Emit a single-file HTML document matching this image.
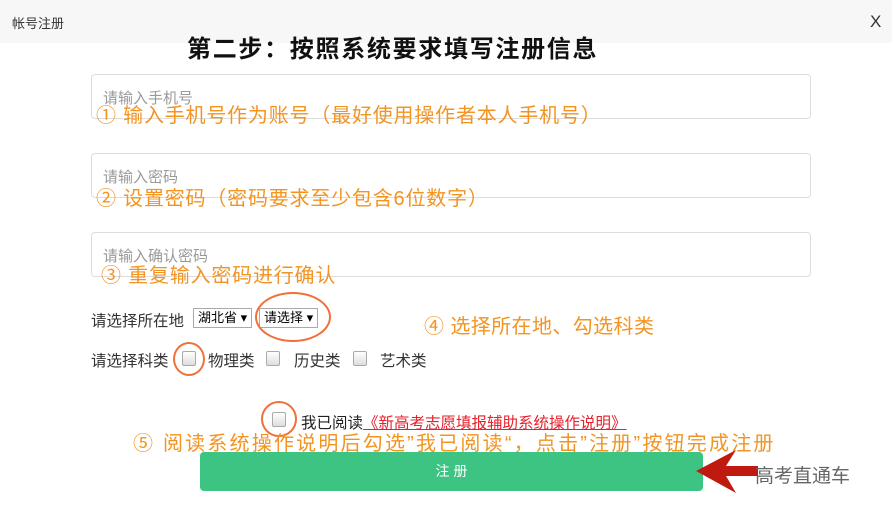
<!DOCTYPE html><html><head><meta charset="utf-8"><style>
body{margin:0;width:892px;height:514px;position:relative;background:#fff;font-family:"Liberation Sans","Noto Sans CJK SC",sans-serif;overflow:hidden}
.a{position:absolute;white-space:nowrap}
.hd{position:absolute;left:0;top:0;width:892px;height:43px;background:#f7f7f7}
.in{position:absolute;left:91px;width:718px;height:43px;border:1px solid #ddd;border-radius:4px}
.ph{color:#999;font-size:15px}
.or{color:#f39422;font-size:20px;letter-spacing:0.8px}
.cb{position:absolute;width:12px;height:13px;border:1px solid #aaa;border-radius:2px;background:linear-gradient(#fff,#ddd)}
.sel{position:absolute;height:18px;border:1px solid #aaa;font-size:13px;line-height:18px;padding:0 4px;background:#fff}
.ring{position:absolute;border:2.5px solid #f0703a;border-radius:50%}
.lb{font-size:15.5px;color:#333}
</style></head><body>
<div class="hd"></div>
<div class="a" style="left:12px;top:13px;font-size:13px;color:#333">帐号注册</div>
<div class="a" style="left:870px;top:12px;font-size:17px;color:#333">X</div>
<div class="a" style="left:187px;top:29px;font-size:24px;letter-spacing:1.7px;font-weight:bold;color:#111">第二步：按照系统要求填写注册信息</div>
<div class="in" style="top:74px"></div>
<div class="in" style="top:153px"></div>
<div class="in" style="top:232px"></div>
<div class="a ph" style="left:103px;top:87px">请输入手机号</div>
<div class="a ph" style="left:103px;top:166px">请输入密码</div>
<div class="a ph" style="left:103px;top:245px">请输入确认密码</div>
<div class="a or" style="left:96px;top:99px">① 输入手机号作为账号（最好使用操作者本人手机号）</div>
<div class="a or" style="left:96px;top:182px">② 设置密码（密码要求至少包含6位数字）</div>
<div class="a or" style="left:101px;top:259px">③ 重复输入密码进行确认</div>
<div class="a lb" style="left:91px;top:309px">请选择所在地</div>
<div class="sel" style="left:193px;top:308px">湖北省 ▾</div>
<div class="sel" style="left:259px;top:308px">请选择 ▾</div>
<div class="ring" style="left:255px;top:292px;width:72px;height:46px"></div>
<div class="a or" style="left:424px;top:310px;letter-spacing:0.4px">④ 选择所在地、勾选科类</div>
<div class="a lb" style="left:91px;top:349px">请选择科类</div>
<div class="cb" style="left:182px;top:351px"></div>
<div class="ring" style="left:173px;top:342px;width:28px;height:30px"></div>
<div class="a lb" style="left:208px;top:349px">物理类</div>
<div class="cb" style="left:266px;top:351px"></div>
<div class="a lb" style="left:294px;top:349px">历史类</div>
<div class="cb" style="left:353px;top:351px"></div>
<div class="a lb" style="left:380px;top:349px">艺术类</div>
<div class="cb" style="left:272px;top:412px"></div>
<div class="ring" style="left:261px;top:401px;width:32px;height:32px"></div>
<div class="a" style="left:301px;top:411px;font-size:15.5px;color:#222">我已阅读<span style="color:#e8202a;text-decoration:underline">《新高考志愿填报辅助系统操作说明》</span></div>
<div class="a or" style="left:133px;top:427px;letter-spacing:2.2px">⑤ 阅读系统操作说明后勾选”我已阅读“，点击”注册”按钮完成注册</div>
<div class="a" style="left:200px;top:452px;width:503px;height:39px;background:#3dc482;border-radius:4px;color:#fff;font-size:14px;line-height:39px;text-align:center">注 册</div>
<svg class="a" style="left:690px;top:445px" width="180" height="52"><polygon points="6,26 46,5 36,21 68,21 68,31 36,31 46,48" fill="#c01a10"/></svg>
<div class="a" style="left:755px;top:461px;font-size:19px;color:#666">高考直通车</div>
</body></html>
